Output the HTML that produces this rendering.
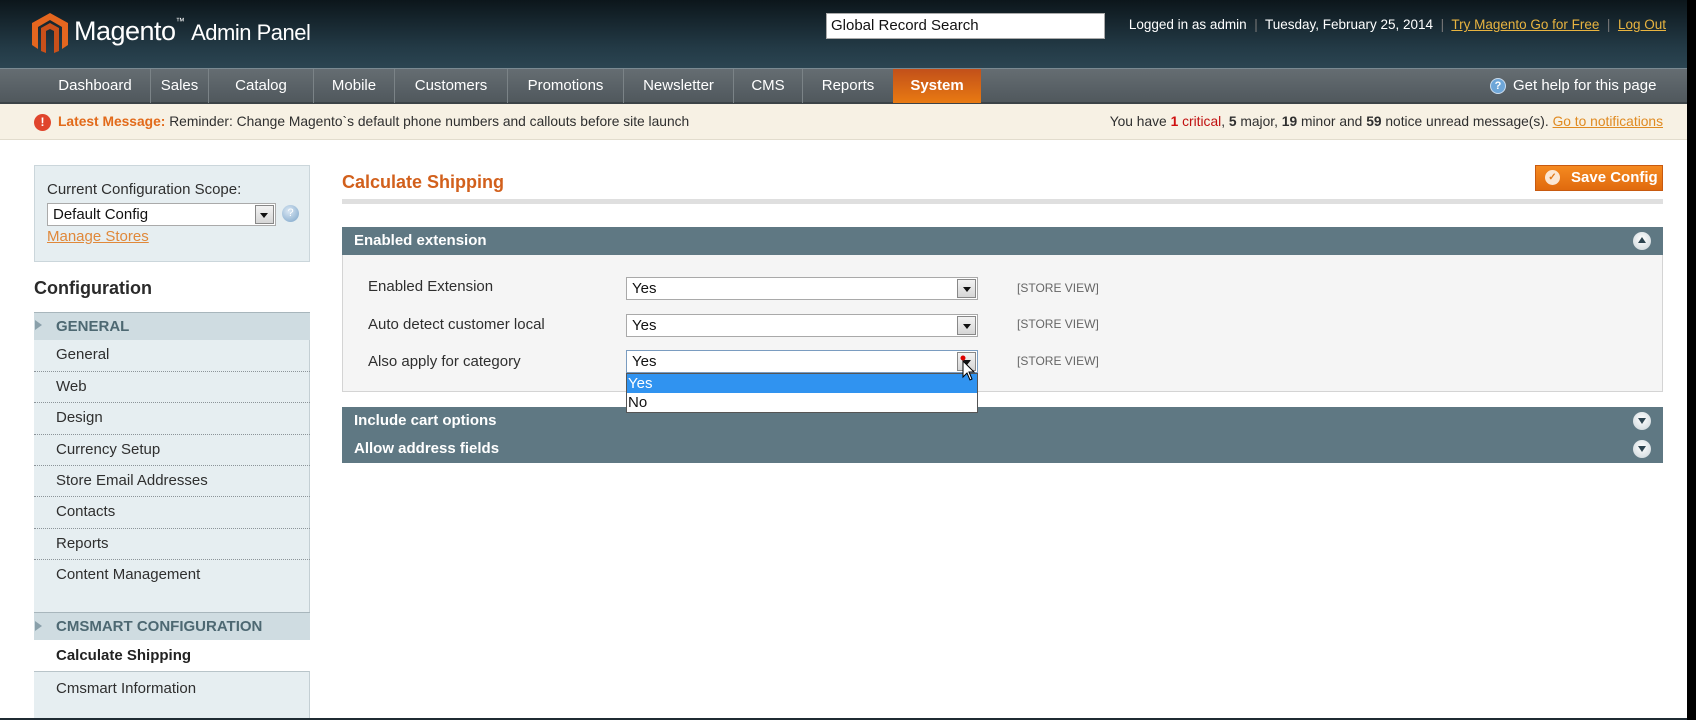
<!DOCTYPE html>
<html><head><meta charset="utf-8"><style>
*{margin:0;padding:0;box-sizing:border-box}
body{width:1696px;height:720px;overflow:hidden;background:#fff;font-family:"Liberation Sans",Arial,sans-serif;position:relative;color:#2f2f2f}
.a{position:absolute}
#hdr{left:0;top:0;width:1696px;height:68px;background:linear-gradient(#0c161b,#233a46 70%,#2b4552)}
#nav{left:0;top:68px;width:1696px;height:36px;background:linear-gradient(#656d72,#50585d);border-top:1px solid #7a8a92;border-bottom:2px solid #3c4347}
.ni{position:absolute;top:0;height:34px;line-height:34px;color:#fff;font-size:15px;text-align:center;border-right:1px solid #7b8387}
#msg{left:0;top:104px;width:1696px;height:36px;background:#f7f1e4;border-bottom:1px solid #e2dccd;font-size:13.8px;line-height:36px}
.side{background:#e6eef1}
.sitem{position:absolute;left:56px;font-size:15px;color:#2f2f2f}
.dot{position:absolute;left:34px;width:276px;border-top:1px dotted #8c9499}
.bar{position:absolute;left:342px;width:1321px;height:28px;background:#5f7883;color:#fff;font-weight:bold;font-size:15px;line-height:28px;padding-left:12px}
.circ{position:absolute;right:12px;top:5px;width:18px;height:18px;border-radius:50%;background:radial-gradient(circle at 50% 40%,#fff,#c9d3d8);}
.sel{position:absolute;left:626px;width:352px;height:23px;border:1px solid #a9a9a9;background:#fff;font-size:15px;line-height:21px;padding-left:5px;color:#111}
.sel i{position:absolute;right:1px;top:1px;width:19px;height:19px;background:linear-gradient(#f3f3f3,#d6d6d6);border:1px solid #888}
.sel i:after{content:"";position:absolute;left:5px;top:7px;border-left:4px solid transparent;border-right:4px solid transparent;border-top:5px solid #111}
.lab{position:absolute;left:368px;font-size:15px;color:#2f2f2f}
.sv{position:absolute;left:1017px;font-size:12px;color:#666}
</style></head><body>
<div id="hdr" class="a">
 <svg class="a" style="left:32px;top:13px" width="36" height="40" viewBox="0 0 36 40"><path d="M18 0 L36 10 V32 L30 36 V14 L18 7 L6 14 V36 L0 32 V10Z" fill="#e4661f"/><path d="M18 10 L27 15 V38 L22 40 V18 L18 16 L14 18 V40 L9 38 V15Z" fill="#c9501a"/></svg>
 <div class="a" style="left:74px;top:16px;color:#fff;font-size:27px;letter-spacing:-0.5px">Magento<span style="font-size:9px;vertical-align:top">™</span> <span style="font-size:22px;letter-spacing:-0.5px">Admin Panel</span></div>
 <div class="a" style="left:826px;top:13px;width:279px;height:26px;background:#fff;border:1px solid #aaa;font-size:15px;line-height:24px;padding-left:4px;color:#111">Global Record Search</div>
 <div class="a" style="right:30px;top:17px;color:#fff;font-size:13.5px;white-space:nowrap">Logged in as admin <span style="color:#777">&nbsp;|&nbsp;</span> Tuesday, February 25, 2014 <span style="color:#777">&nbsp;|&nbsp;</span> <u style="color:#e8b440">Try Magento Go for Free</u> <span style="color:#777">&nbsp;|&nbsp;</span> <u style="color:#e8b440">Log Out</u></div>
</div>
<div id="nav" class="a">
 <div class="ni" style="left:40px;width:111px">Dashboard</div>
 <div class="ni" style="left:151px;width:58px">Sales</div>
 <div class="ni" style="left:209px;width:105px">Catalog</div>
 <div class="ni" style="left:314px;width:81px">Mobile</div>
 <div class="ni" style="left:395px;width:113px">Customers</div>
 <div class="ni" style="left:508px;width:116px">Promotions</div>
 <div class="ni" style="left:624px;width:110px">Newsletter</div>
 <div class="ni" style="left:734px;width:69px">CMS</div>
 <div class="ni" style="left:803px;width:90px;border-right:none">Reports</div>
 <div class="ni" style="left:893px;width:88px;background:linear-gradient(#c2501a,#e97a12);font-weight:bold;border-right:none">System</div>
 <div class="a" style="left:1490px;top:9px;width:16px;height:16px;border-radius:50%;background:#6ea6d8;border:1px solid #cde;color:#fff;font-size:11px;line-height:14px;text-align:center;font-weight:bold">?</div>
 <div class="a" style="left:1513px;top:0;line-height:34px;color:#fff;font-size:15px">Get help for this page</div>
</div>
<div id="msg" class="a">
 <div class="a" style="left:34px;top:10px;width:17px;height:17px;border-radius:50%;background:#e0452c;color:#fff;font-size:12px;line-height:17px;text-align:center;font-weight:bold">!</div>
 <div class="a" style="left:58px;top:0;white-space:nowrap"><b style="color:#e26a1a">Latest Message:</b> Reminder: Change Magento`s default phone numbers and callouts before site launch</div>
 <div class="a" style="right:33px;top:0;white-space:nowrap">You have <b style="color:#d01010">1</b> <span style="color:#c01010">critical</span>, <b>5</b> major, <b>19</b> minor and <b>59</b> notice unread message(s). <u style="color:#e08a20">Go to notifications</u></div>
</div>
<!-- sidebar -->
<div class="a side" style="left:34px;top:165px;width:276px;height:97px;border:1px solid #cbd6db"></div>
<div class="a" style="left:47px;top:181px;font-size:15px">Current Configuration Scope:</div>
<div class="a" style="left:47px;top:203px;width:229px;height:23px;background:#fff;border:1px solid #aaa;font-size:15px;line-height:21px;padding-left:5px;color:#111">Default Config<span class="a" style="right:1px;top:1px;width:19px;height:19px;background:linear-gradient(#f3f3f3,#d6d6d6);border:1px solid #888"></span><span class="a" style="right:7px;top:9px;border-left:4px solid transparent;border-right:4px solid transparent;border-top:5px solid #111"></span></div>
<div class="a" style="left:282px;top:205px;width:17px;height:17px;border-radius:50%;background:radial-gradient(circle at 40% 35%,#dbe8f4,#7aa3c8);color:#fff;font-size:11px;line-height:17px;text-align:center">?</div>
<div class="a" style="left:47px;top:228px;font-size:15px;color:#e0883a;text-decoration:underline">Manage Stores</div>
<div class="a" style="left:34px;top:278px;font-size:18px;font-weight:bold;color:#2a2a2a">Configuration</div>
<div class="a side" style="left:34px;top:313px;width:276px;height:300px;border-right:1px solid #c4cfd4"></div>
<div class="a" style="left:34px;top:312px;width:276px;height:28px;background:#cfdce1;border-top:1px solid #a8b6bc"></div>
<div class="a" style="left:35px;top:320px;border-top:5px solid transparent;border-bottom:5px solid transparent;border-left:7px solid #8aa0aa"></div>
<div class="a" style="left:56px;top:318px;font-size:15px;font-weight:bold;color:#4d6872">GENERAL</div>
<div class="sitem" style="top:346px">General</div><div class="dot" style="top:371px"></div>
<div class="sitem" style="top:378px">Web</div><div class="dot" style="top:402px"></div>
<div class="sitem" style="top:409px">Design</div><div class="dot" style="top:434px"></div>
<div class="sitem" style="top:441px">Currency Setup</div><div class="dot" style="top:465px"></div>
<div class="sitem" style="top:472px">Store Email Addresses</div><div class="dot" style="top:496px"></div>
<div class="sitem" style="top:503px">Contacts</div><div class="dot" style="top:528px"></div>
<div class="sitem" style="top:535px">Reports</div><div class="dot" style="top:559px"></div>
<div class="sitem" style="top:566px">Content Management</div>
<div class="a" style="left:34px;top:612px;width:276px;height:28px;background:#cfdce1;border-top:1px solid #a8b6bc"></div>
<div class="a" style="left:35px;top:621px;border-top:5px solid transparent;border-bottom:5px solid transparent;border-left:7px solid #8aa0aa"></div>
<div class="a" style="left:56px;top:618px;font-size:15px;font-weight:bold;color:#4d6872">CMSMART CONFIGURATION</div>
<div class="sitem" style="top:647px;font-weight:bold;color:#222">Calculate Shipping</div>
<div class="a side" style="left:34px;top:671px;width:276px;height:47px;border-top:1px solid #b8c4c9;border-right:1px solid #c4cfd4"></div>
<div class="sitem" style="top:680px">Cmsmart Information</div>
<div class="a" style="left:0;top:718px;width:1696px;height:2px;background:#1f2b33"></div>
<div class="a" style="left:1687px;top:0;width:9px;height:720px;background:#000"></div>
<!-- main -->
<div class="a" style="left:342px;top:172px;font-size:18px;font-weight:bold;color:#d2601c">Calculate Shipping</div>
<div class="a" style="left:342px;top:199px;width:1321px;height:5px;background:#dfdfdf"></div>
<div class="a" style="left:1535px;top:165px;width:128px;height:26px;background:linear-gradient(#f58a20,#e06a0e);border:1px solid #c85a10;color:#fff;font-weight:bold;font-size:15px;line-height:24px;padding-left:35px">Save Config</div>
<div class="a" style="left:1545px;top:170px;width:15px;height:15px;border-radius:50%;background:#fbe7d4;color:#e07a1c;font-size:10px;line-height:15px;text-align:center;font-weight:bold">✓</div>
<div class="bar" style="top:227px">Enabled extension<div class="circ"><div class="a" style="left:5px;top:5px;border-left:4px solid transparent;border-right:4px solid transparent;border-bottom:6px solid #2d4450"></div></div></div>
<div class="a" style="left:342px;top:255px;width:1321px;height:137px;background:#f5f5f5;border:1px solid #d4d4d4;border-top:none"></div>
<div class="lab" style="top:278px">Enabled Extension</div>
<div class="sel" style="top:277px">Yes<i></i></div>
<div class="sv" style="top:281px">[STORE VIEW]</div>
<div class="lab" style="top:316px">Auto detect customer local</div>
<div class="sel" style="top:314px">Yes<i></i></div>
<div class="sv" style="top:317px">[STORE VIEW]</div>
<div class="lab" style="top:353px">Also apply for category</div>
<div class="sel" style="top:350px;border-color:#7a9cc0">Yes<i></i></div>
<div class="sv" style="top:354px">[STORE VIEW]</div>
<div class="bar" style="top:407px">Include cart options<div class="circ"><div class="a" style="left:5px;top:6px;border-left:4px solid transparent;border-right:4px solid transparent;border-top:6px solid #2d4450"></div></div></div>
<div class="bar" style="top:435px">Allow address fields<div class="circ"><div class="a" style="left:5px;top:6px;border-left:4px solid transparent;border-right:4px solid transparent;border-top:6px solid #2d4450"></div></div></div>
<div class="a" style="left:626px;top:373px;width:352px;height:40px;background:#fff;border:1px solid #555;font-size:15px;color:#111">
 <div style="height:19px;background:#3093f0;color:#fff;line-height:19px;padding-left:1px">Yes</div>
 <div style="line-height:19px;padding-left:1px">No</div>
</div>
<svg class="a" style="left:960px;top:355px" width="16" height="30" viewBox="0 0 16 30"><circle cx="3" cy="3" r="2.5" fill="#d00"/><path d="M3 6 L3 22 L7 18 L10 25 L12 24 L9 17 L14 17 Z" fill="#fff" stroke="#000" stroke-width="1"/></svg>
</body></html>
